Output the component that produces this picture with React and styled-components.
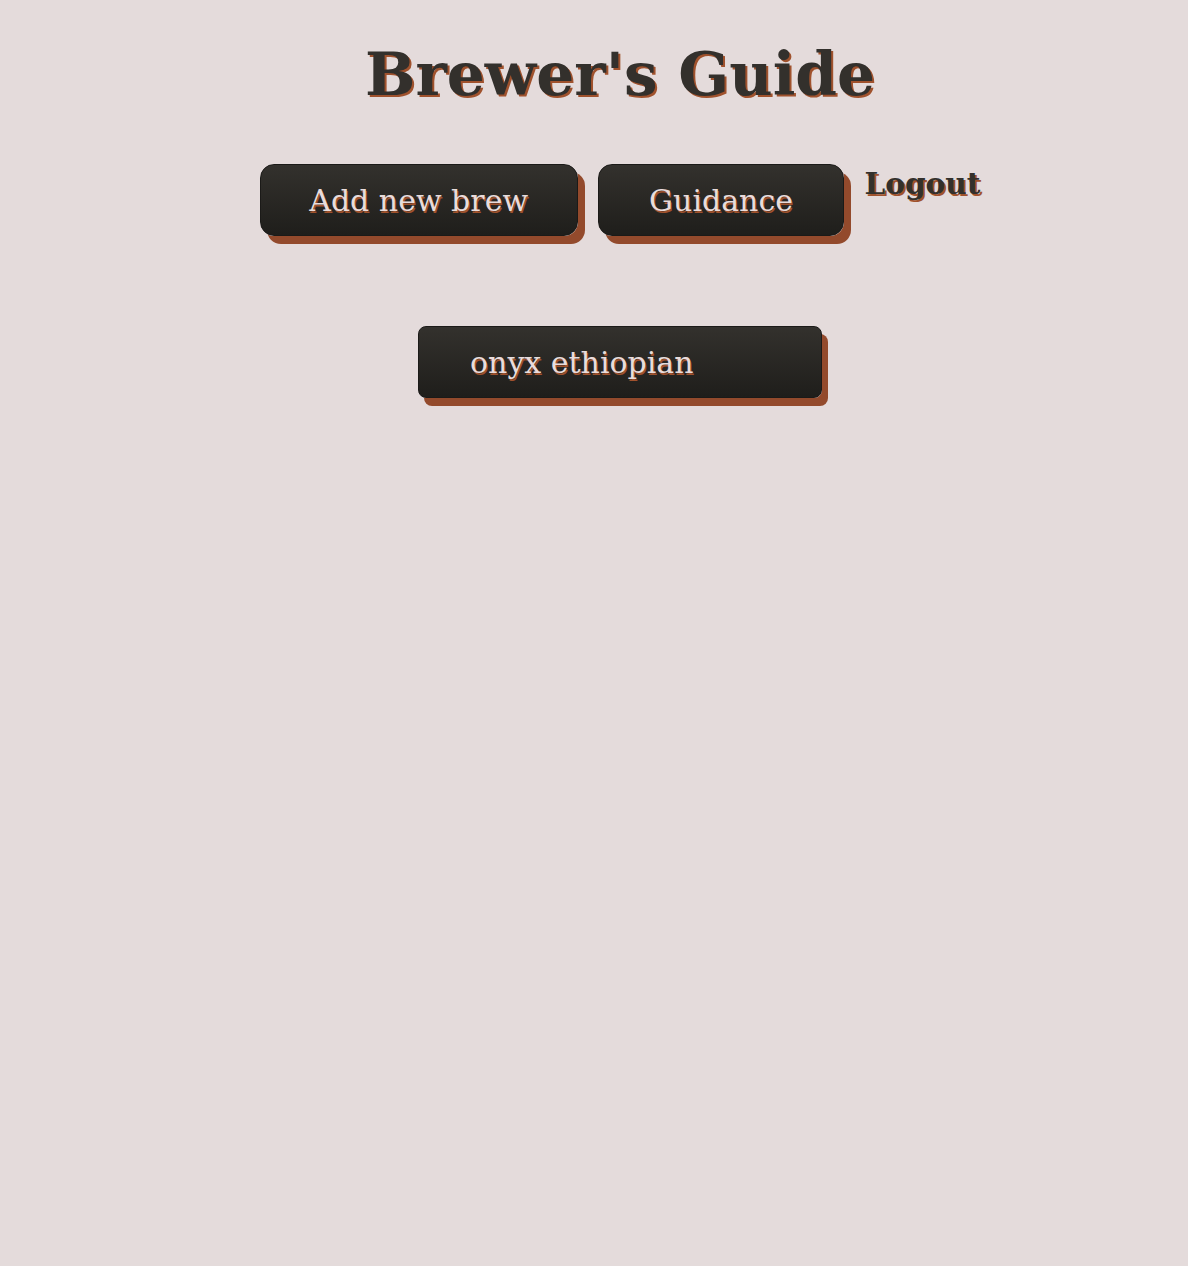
import React from "react";
import styled, { createGlobalStyle } from "styled-components";

const Global = createGlobalStyle`
  html, body { background: #e4dbdb; }
  body { margin: 8px; font-family: "DejaVu Serif", Georgia, serif; }
`;

const Page = styled.div`
  display: flex;
  flex-direction: column;
  align-items: center;
  padding: 0 0 40px 52px;
`;

const Title = styled.h1`
  margin: 20px 0 0;
  font-size: 59.7px;
  line-height: 92px;
  font-weight: 700;
  color: #33302c;
  text-shadow: 2px 2px 0 #a0522d;
`;

const Nav = styled.nav`
  display: flex;
  align-items: flex-start;
  gap: 20px;
  margin-top: 44px;
`;

const Button = styled.button`
  height: 72px;
  padding: 0 ${(p) => p.$pad}px;
  border: 1px solid #1b1a18;
  border-radius: 14px;
  background: linear-gradient(#33312d, #1f1e1b);
  box-shadow: 7px 8px 0 #934a2c;
  color: #e8dcdc;
  font-family: "DejaVu Serif", Georgia, serif;
  font-size: 30px;
  text-shadow: 1px 2px 0 #a0522d;
  cursor: pointer;
`;

const Logout = styled.a`
  margin-top: 2px;
  font-size: 29.5px;
  font-weight: 700;
  color: #33302c;
  text-shadow: 2px 2px 0 #a0522d;
  line-height: 36px;
  cursor: pointer;
`;

const List = styled.div`
  display: flex;
  flex-direction: column;
  gap: 20px;
  margin-top: 90px;
  padding-bottom: 12px;
`;

const Brew = styled.div`
  width: 404px;
  height: 72px;
  box-sizing: border-box;
  display: flex;
  align-items: center;
  padding-left: 51px;
  border: 1px solid #1b1a18;
  border-radius: 8px;
  background: linear-gradient(#33312d, #1f1e1b);
  box-shadow: 6px 8px 0 #934a2c;
  color: #e8dcdc;
  font-size: 30px;
  text-shadow: 1px 2px 0 #a0522d;
`;

export default function App() {
  return (
    <>
      <Global />
      <Page>
        <Title>Brewer's Guide</Title>
        <Nav>
          <Button $pad={48.5}>Add new brew</Button>
          <Button $pad={50.5}>Guidance</Button>
          <Logout>Logout</Logout>
        </Nav>
        <List>
          <Brew>onyx ethiopian</Brew>
        </List>
      </Page>
    </>
  );
}
